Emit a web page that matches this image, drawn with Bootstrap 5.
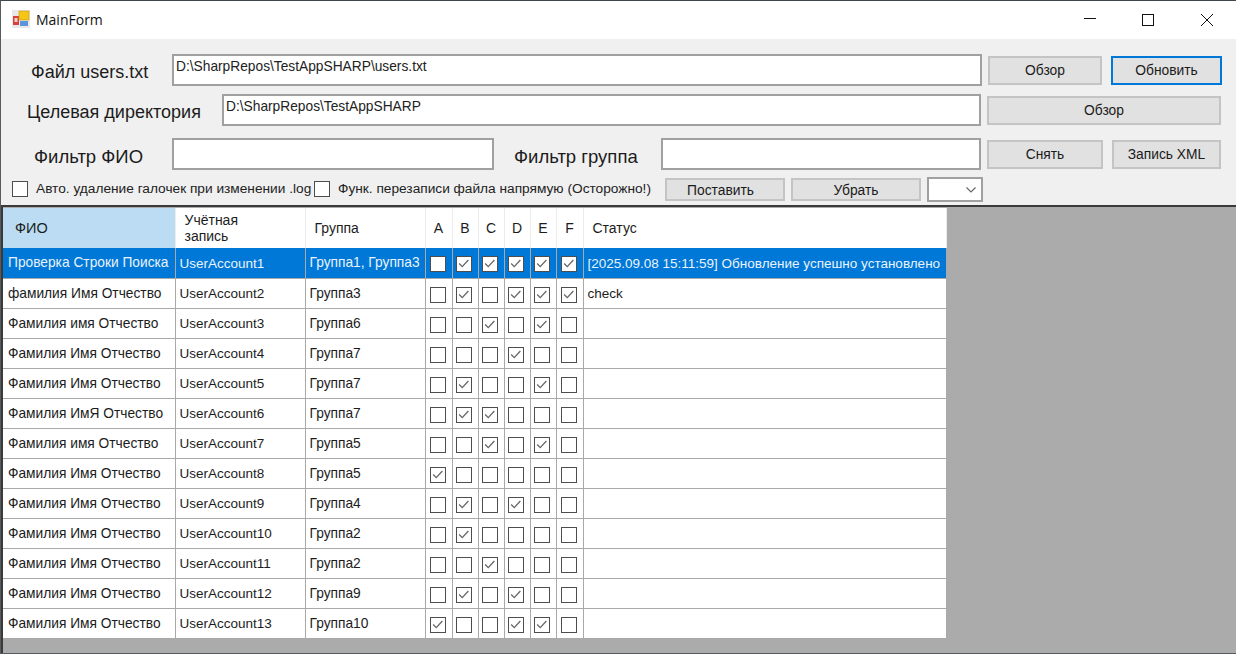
<!DOCTYPE html>
<html lang="ru"><head><meta charset="utf-8"><title>MainForm</title>
<link href="https://cdn.jsdelivr.net/npm/bootstrap@5.3.0/dist/css/bootstrap.min.css" rel="stylesheet">
<style>
html,body{height:100%;overflow:hidden}
body{font-family:"Liberation Sans",Arial,sans-serif;font-size:13.75px;color:#1a1a1a;background:#ababab}
.win{width:1236px;height:654px;border-top:1px solid #3f4650;border-left:1px solid #555b63;border-bottom:1px solid #555b63;background:#ababab}
.titlebar{height:38px;background:#fff;padding-left:11px;flex:none}
.appicon{margin-bottom:2px}
.titletext{font-family:"Open Sans",sans-serif;font-size:14px;margin-left:6px;margin-bottom:1px;color:#111}
.winbtn{width:46px;height:38px}
.winbtn+.winbtn{margin-left:12px}
.winbtn+.winbtn+.winbtn{margin-left:13px}
.winbtns{margin-right:6px}
.form{height:168px;background:#f0f0f0;border-bottom:2px solid #3a3a3a;flex:none}
.frow{height:32px}
.r1{margin-top:15px}.r2{margin-top:8px}.r3{margin-top:12px}.r4{margin-top:7px;height:25px}
.flabel{font-size:18px;color:#1c1c1c;white-space:nowrap;padding-top:5px}
.r3 .flabel{padding-top:5px;font-size:18.500px}
.l1{width:171px;padding-left:30px}.l2{width:221px;padding-left:26px}.l3{width:171px;padding-left:33px}
.l4{width:167px;padding-left:20px}
.ffield{height:32px;border:2px solid #a0a0a0;border-radius:0;padding:4px 2px 0;background:#fff;font-size:13.75px;line-height:14px;color:#222;font-family:inherit;box-shadow:none;vertical-align:top;resize:none;overflow:hidden;outline:0}
.w810{width:810px}.w759{width:759px}.w322{width:322px}.w320{width:320px}
.wbtn{height:29px;padding:2px 0 0;border:2px solid #c4c4c4;border-radius:0;background:#e1e1e1;color:#1a1a1a;font-size:13.8px;font-family:inherit;line-height:1}
.wbtn:hover{background:#e1e1e1;border-color:#c4c4c4;color:#1a1a1a}
.wbtn.act{border-color:#0078d7}
.wbtn.act:hover{border-color:#0078d7}
.b82{width:114px;margin-left:6px}.b111{width:111px;margin-left:9px}.b234{width:234px;margin-left:6px}.b116{width:116px;margin-left:6px}.b109{width:109px;margin-left:9px}
.b120{width:120px;height:23px;padding-right:9px}.b130{width:130px;margin-left:6px;height:23px}
.wcheck{appearance:none;width:16px;height:16px;margin:0;border:1.5px solid #4d4d4d;background:#fff;border-radius:0;display:block;flex:none}
.wcheck:checked{background:#fff url("data:image/svg+xml,%3Csvg xmlns='http://www.w3.org/2000/svg' viewBox='0 0 16 16'%3E%3Cpath d='M2.500 7.500l3.500 3.500 7-7.500' fill='none' stroke='%23666' stroke-width='1.500'/%3E%3C/svg%3E") center/100% no-repeat}
.cklabel{font-size:13.7px;color:#222;white-space:nowrap;margin-left:8px}
.r4 .wcheck{margin-bottom:2px}
.chk1{margin-left:11px}
.lb1{width:278px}.lb2{width:327px}
.wselect{width:56px;height:25px;margin-left:6px;border:2px solid #a0a0a0;background:#fff;padding:0}
.gridwrap{flex:1 1 auto;border-left:2px solid #3a3a3a;padding-top:1px}
.grid{table-layout:fixed;width:944px;border-collapse:collapse;background:#fff}
.grid th,.grid td{border:0;border-right:1px solid #a9a9a9;border-bottom:1px solid #a9a9a9;padding:0;overflow:hidden;white-space:nowrap;vertical-align:middle;background:#fff;color:#1c1c1c;font-weight:400;box-shadow:none}
.grid thead th{height:40px;border-right:1px solid #ececec;border-bottom:0;padding-left:9px;line-height:16px;font-size:14px}
.grid thead th.hsel{background:#bbdcf3;padding-left:12px;font-size:14.500px}
.grid thead th.hg{padding-left:9px}
.grid thead th.hc{padding:0;text-align:center}
.grid tbody td{height:30px;padding:2px 0 0 4px}
.grid tbody td.cname{padding-left:5px}
.grid tbody td.cuser{font-size:13.500px}
.grid tbody td.cstat{font-size:13.500px}
.grid tbody td.cc{padding:3px 2px 0 0}
.grid tbody td.cc .wcheck{margin:0 auto}
.grid tr.sel td{background:#0078d7;color:#eaf3fb}
</style></head>
<body>
<div class="win d-flex flex-column">
  <div class="titlebar d-flex align-items-center">
    <svg class="appicon" width="18" height="18" viewBox="0 0 18 18"><rect x="0" y="0" width="18" height="18" fill="#e8e8e8"/><rect x="1" y="6" width="6" height="9" fill="#d9403a"/><rect x="2.500" y="8" width="3" height="4" fill="#f4d0c8"/><rect x="7" y="1" width="10" height="9" fill="#f5c518" stroke="#c79a10" stroke-width=".6"/><rect x="8" y="11" width="8" height="5" fill="#5a94dc"/></svg>
    <span class="titletext">MainForm</span>
    <div class="winbtns ms-auto d-flex">
      <div class="winbtn d-flex align-items-center justify-content-center"><svg width="14" height="14" viewBox="0 0 14 14"><path d="M1 5.500h12" stroke="#111" fill="none"/></svg></div>
      <div class="winbtn d-flex align-items-center justify-content-center"><svg width="14" height="14" viewBox="0 0 14 14"><rect x="1.500" y="1.500" width="11" height="11" stroke="#111" fill="none"/></svg></div>
      <div class="winbtn d-flex align-items-center justify-content-center"><svg width="14" height="14" viewBox="0 0 14 14"><path d="M1 1l12 12M13 1L1 13" stroke="#111" fill="none"/></svg></div>
    </div>
  </div>
  <div class="form">
    <div class="frow r1 d-flex align-items-center">
      <div class="flabel l1">Файл users.txt</div>
      <textarea class="ffield w810" rows="1">D:\SharpRepos\TestAppSHARP\users.txt</textarea>
      <button class="btn wbtn b82">Обзор</button>
      <button class="btn wbtn act b111">Обновить</button>
    </div>
    <div class="frow r2 d-flex align-items-center">
      <div class="flabel l2">Целевая директория</div>
      <textarea class="ffield w759" rows="1">D:\SharpRepos\TestAppSHARP</textarea>
      <button class="btn wbtn b234">Обзор</button>
    </div>
    <div class="frow r3 d-flex align-items-center">
      <div class="flabel l3">Фильтр ФИО</div>
      <input class="ffield w322" type="text">
      <div class="flabel l4">Фильтр группа</div>
      <input class="ffield w320" type="text">
      <button class="btn wbtn b116">Снять</button>
      <button class="btn wbtn b109">Запись XML</button>
    </div>
    <div class="frow r4 d-flex align-items-center">
      <input type="checkbox" class="wcheck chk1">
      <span class="cklabel lb1">Авто. удаление галочек при изменении .log</span>
      <input type="checkbox" class="wcheck chk2">
      <span class="cklabel lb2">Функ. перезаписи файла напрямую (Осторожно!)</span>
      <button class="btn wbtn b120">Поставить</button>
      <button class="btn wbtn b130">Убрать</button>
      <div class="wselect d-flex align-items-center justify-content-end pe-1"><svg width="12" height="8" viewBox="0 0 12 8"><path d="M1.500 1.500L6 6l4.500-4.500" stroke="#666" fill="none" stroke-width="1.200"/></svg></div>
    </div>
  </div>
  <div class="gridwrap">
  <table class="grid">
    <colgroup><col style="width:172px"><col style="width:130px"><col style="width:120px"><col style="width:27px"><col style="width:26px"><col style="width:26px"><col style="width:26px"><col style="width:26px"><col style="width:27px"><col></colgroup>
    <thead><tr><th class="hsel">ФИО</th><th>Учётная<br>запись</th><th class="hg">Группа</th><th class="hc">A</th><th class="hc">B</th><th class="hc">C</th><th class="hc">D</th><th class="hc">E</th><th class="hc">F</th><th>Статус</th></tr></thead>
    <tbody></tbody>
  </table>
  </div>
</div>
<script>
const rows=[["Проверка Строки Поиска","Группа1, Группа3","011111","[2025.09.08 15:11:59] Обновление успешно установлено"],
["фамилия Имя Отчество","Группа3","010111","check"],
["Фамилия имя Отчество","Группа6","001010",""],
["Фамилия Имя Отчество","Группа7","000100",""],
["Фамилия Имя Отчество","Группа7","010010",""],
["Фамилия ИмЯ Отчество","Группа7","011000",""],
["Фамилия имя Отчество","Группа5","001010",""],
["Фамилия Имя Отчество","Группа5","100000",""],
["Фамилия Имя Отчество","Группа4","010100",""],
["Фамилия Имя Отчество","Группа2","010000",""],
["Фамилия Имя Отчество","Группа2","001000",""],
["Фамилия Имя Отчество","Группа9","010100",""],
["Фамилия Имя Отчество","Группа10","100110",""]];
document.querySelector('.grid tbody').innerHTML=rows.map((r,i)=>`<tr class="${i==0?'sel':''}"><td class="cname">${r[0]}</td><td class="cuser">UserAccount${i+1}</td><td>${r[1]}</td>${[...r[2]].map(c=>`<td class="cc"><input type="checkbox" class="wcheck" ${c=='1'?'checked':''}></td>`).join('')}<td class="cstat">${r[3]}</td></tr>`).join('');
</script>
</body></html>
